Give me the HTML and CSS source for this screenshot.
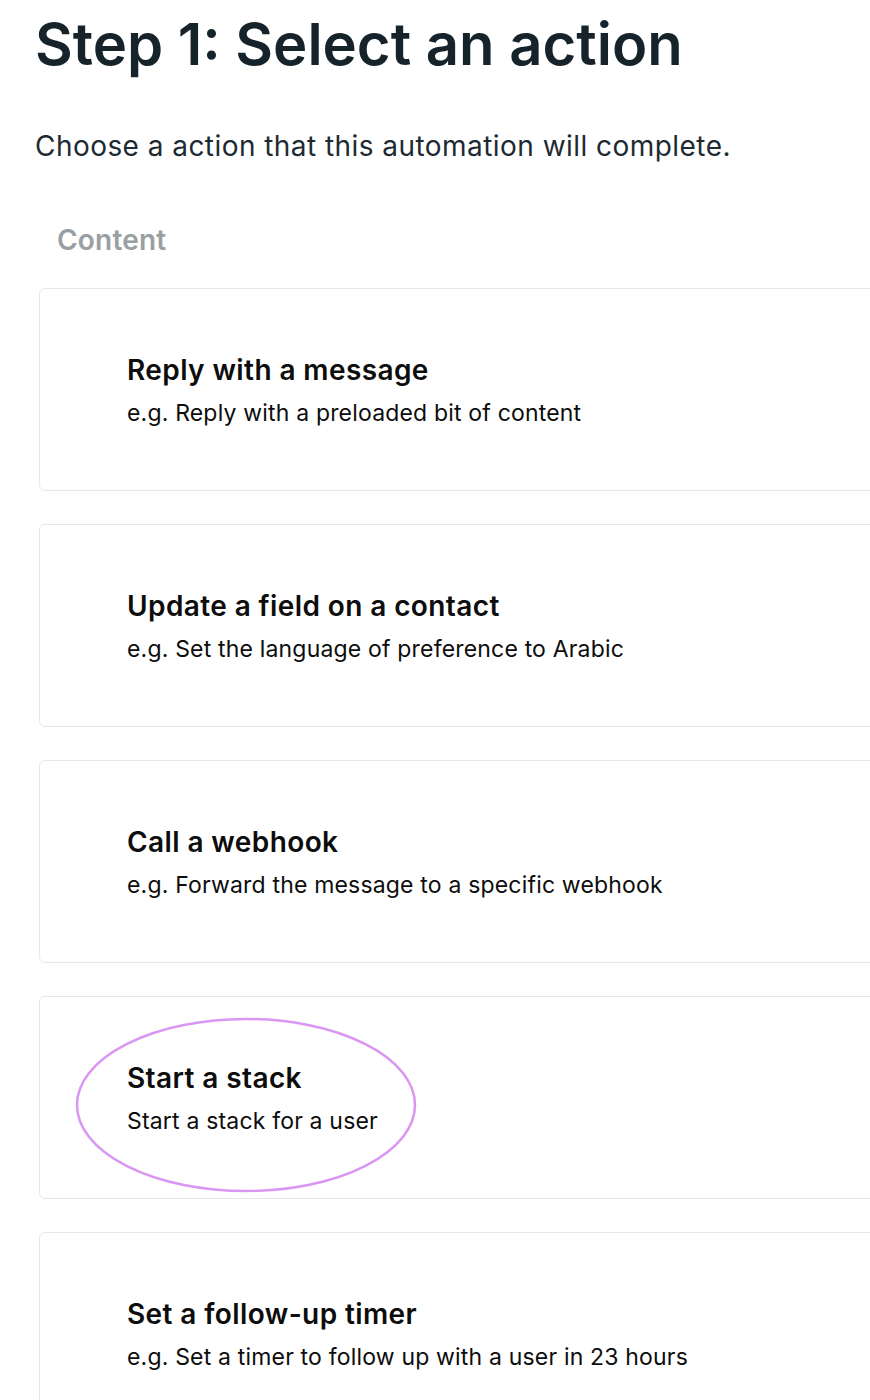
FILE: index.html
```html
<!DOCTYPE html>
<html>
<head>
    <meta charset="utf-8">
    <title>Select an action</title>
    <link rel="stylesheet" href="styles.css">
</head>
<body>
    <div class="page">
        <h1 class="page-title">Step 1: Select an action</h1>
        <p class="page-lead">Choose a action that this automation will complete.</p>
        <h2 class="group-label">Content</h2>
        <div class="action-list">
            <div class="action-card">
                <div class="action-name">Reply with a message</div>
                <div class="action-desc">e.g. Reply with a preloaded bit of content</div>
            </div>
            <div class="action-card">
                <div class="action-name">Update a field on a contact</div>
                <div class="action-desc">e.g. Set the language of preference to Arabic</div>
            </div>
            <div class="action-card">
                <div class="action-name">Call a webhook</div>
                <div class="action-desc">e.g. Forward the message to a specific webhook</div>
            </div>
            <div class="action-card">
                <div class="action-name">Start a stack</div>
                <div class="action-desc">Start a stack for a user</div>
                <svg class="highlight" width="346" height="178" viewBox="0 0 346 178">
                    <ellipse cx="173" cy="89" rx="169" ry="86" fill="none" stroke="#d996f2" stroke-width="2.5" />
                </svg>
            </div>
            <div class="action-card">
                <div class="action-name">Set a follow-up timer</div>
                <div class="action-desc">e.g. Set a timer to follow up with a user in 23 hours</div>
            </div>
        </div>
    </div>
</body>
</html>
```

FILE: styles.css
```css
html {
    overflow: hidden;
}
body {
    margin: 0;
    background: #fff;
    font-family: Inter, "Noto Sans", sans-serif;
}
.page {
    padding: 8px 0 0 35px;
}
.page-title {
    margin: 0;
    font-size: 58px;
    line-height: 72px;
    font-weight: 600;
    color: #16232b;
    letter-spacing: 0;
}
.page-lead {
    margin: 48px 0 0;
    font-size: 28px;
    line-height: 36px;
    letter-spacing: 0.45px;
    color: #1e2a32;
}
.group-label {
    margin: 58px 0 0 22px;
    font-size: 28px;
    line-height: 36px;
    font-weight: 600;
    letter-spacing: 0.2px;
    color: #9a9fa3;
}
.action-list {
    display: flex;
    flex-direction: column;
    gap: 33px;
    margin: 30px 0 0 4px;
}
.action-card {
    position: relative;
    width: 900px;
    height: 203px;
    box-sizing: border-box;
    border: 1px solid #e6e7e8;
    border-radius: 6px;
    padding-left: 87px;
    display: flex;
    flex-direction: column;
    justify-content: center;
    gap: 10px;
    color: #0d0d0d;
}
.action-name {
    font-size: 28px;
    line-height: 36px;
    font-weight: 600;
    letter-spacing: 0.4px;
}
.action-desc {
    font-size: 23px;
    line-height: 30px;
    letter-spacing: 0.18px;
}
.highlight {
    position: absolute;
    left: 33px;
    top: 19px;
}
```
